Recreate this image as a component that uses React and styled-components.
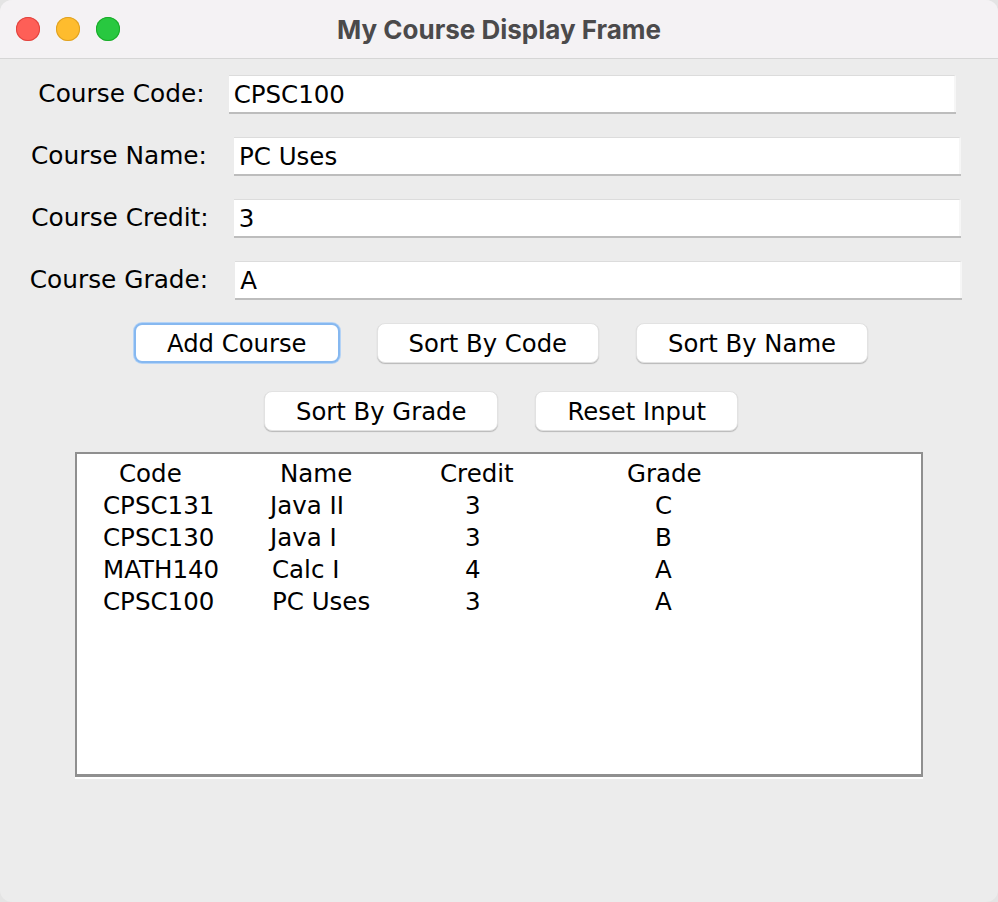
import styled, { createGlobalStyle } from "styled-components";

const GlobalStyle = createGlobalStyle`
  html, body {
    margin: 0;
    padding: 0;
    background: #e4e4e4;
  }
  #root {
    width: 998px;
    height: 902px;
  }
`;

const Window = styled.div`
  width: 998px;
  height: 902px;
  box-sizing: border-box;
  border-radius: 12px;
  overflow: hidden;
  background: #ececec;
  display: flex;
  flex-direction: column;
  font-family: "DejaVu Sans", "Liberation Sans", sans-serif;
  color: #000;
`;

const TitleBar = styled.div`
  height: 58px;
  flex: none;
  background: #f4f2f4;
  border-bottom: 1px solid #d6d6d6;
  display: flex;
  align-items: center;
  padding-left: 16px;
  position: relative;
`;

const Lights = styled.div`
  display: flex;
  gap: 16px;
`;

const Light = styled.span`
  width: 24px;
  height: 24px;
  border-radius: 50%;
  background: ${(p) => p.$color};
  box-shadow: inset 0 0 0 1px ${(p) => p.$edge};
`;

const Title = styled.div`
  position: absolute;
  left: 0;
  right: 0;
  text-align: center;
  font-family: Inter, "Liberation Sans", sans-serif;
  font-weight: 700;
  font-size: 26px;
  color: #4b4a4b;
  pointer-events: none;
`;

const Body = styled.div`
  flex: 1;
  display: flex;
  flex-direction: column;
  align-items: center;
  padding-top: 16px;
`;

const FormRow = styled.div`
  display: flex;
  align-items: center;
  justify-content: center;
  gap: ${(p) => p.$gap}px;
  height: 37px;
  margin-bottom: 25px;
  transform: translateX(${(p) => p.$shift}px);
`;

const Label = styled.span`
  font-size: 24.8px;
  white-space: nowrap;
`;

const Field = styled.input`
  width: 727px;
  height: 37px;
  box-sizing: border-box;
  border: none;
  border-top: 1px solid #dcdcdc;
  border-right: 2px solid #f6f6f6;
  box-shadow: 0 2px 0 #bdbdbd;
  background: #fff;
  font-family: "DejaVu Sans", "Liberation Sans", sans-serif;
  font-size: 24.5px;
  padding: 0 5px;
  color: #000;
  outline: none;
`;

const ButtonRow = styled.div`
  display: flex;
  justify-content: center;
  gap: 37px;
  margin-top: ${(p) => p.$top}px;
  transform: translateX(2px);
`;

const Button = styled.button`
  height: 40px;
  box-sizing: border-box;
  padding: 0 31px;
  border-radius: 8px;
  background: #fff;
  font-family: "DejaVu Sans", "Liberation Sans", sans-serif;
  font-size: 24.3px;
  color: #000;
  cursor: pointer;
  border: ${(p) => (p.$focused ? "2px solid #86b8f0" : "1px solid #e2e2e2")};
  box-shadow: ${(p) =>
    p.$focused ? "0 0 0 1px #b4d3f6" : "0 1px 1px rgba(0, 0, 0, 0.22)"};
`;

const ListBox = styled.div`
  width: 848px;
  height: 325px;
  box-sizing: border-box;
  margin-top: 21px;
  background: #fff;
  border: 2px solid #8f8f8f;
  border-bottom-width: 3px;
  box-shadow: 0 2px 0 #fff;
  padding: 4px 0 0 26px;
`;

const Line = styled.div`
  display: grid;
  grid-template-columns: 167px 170px 187px 1fr;
  height: 32px;
  align-items: center;
  font-size: 24.5px;
  line-height: 32px;
`;

const Cell = styled.span`
  padding-left: ${(p) => p.$indent || 0}px;
  white-space: nowrap;
`;

const fields = [
  { label: "Course Code:", value: "CPSC100", gap: 24, shift: -2 },
  { label: "Course Name:", value: "PC Uses", gap: 27, shift: -3 },
  { label: "Course Credit:", value: "3", gap: 25, shift: -3 },
  { label: "Course Grade:", value: "A", gap: 27, shift: -3 },
];

const courses = [
  ["CPSC131", "Java II", "3", "C"],
  ["CPSC130", "Java I", "3", "B"],
  ["MATH140", "Calc I", "4", "A"],
  ["CPSC100", "PC Uses", "3", "A"],
];

export default function App() {
  return (
    <>
      <GlobalStyle />
      <Window>
        <TitleBar>
          <Lights>
            <Light $color="#fe5f57" $edge="#e0443e" />
            <Light $color="#febc2e" $edge="#dea123" />
            <Light $color="#28c840" $edge="#1aab29" />
          </Lights>
          <Title>My Course Display Frame</Title>
        </TitleBar>
        <Body>
          {fields.map((f) => (
            <FormRow key={f.label} $gap={f.gap} $shift={f.shift}>
              <Label>{f.label}</Label>
              <Field defaultValue={f.value} />
            </FormRow>
          ))}
          <ButtonRow $top={0}>
            <Button $focused>Add Course</Button>
            <Button>Sort By Code</Button>
            <Button>Sort By Name</Button>
          </ButtonRow>
          <ButtonRow $top={28}>
            <Button>Sort By Grade</Button>
            <Button>Reset Input</Button>
          </ButtonRow>
          <ListBox>
            <Line>
              <Cell $indent={16}>Code</Cell>
              <Cell $indent={10}>Name</Cell>
              <Cell>Credit</Cell>
              <Cell>Grade</Cell>
            </Line>
            {courses.map((c) => (
              <Line key={c[0]}>
                <Cell>{c[0]}</Cell>
                <Cell $indent={c[1].startsWith("J") ? 0 : 2}>{c[1]}</Cell>
                <Cell $indent={25}>{c[2]}</Cell>
                <Cell $indent={28}>{c[3]}</Cell>
              </Line>
            ))}
          </ListBox>
        </Body>
      </Window>
    </>
  );
}
